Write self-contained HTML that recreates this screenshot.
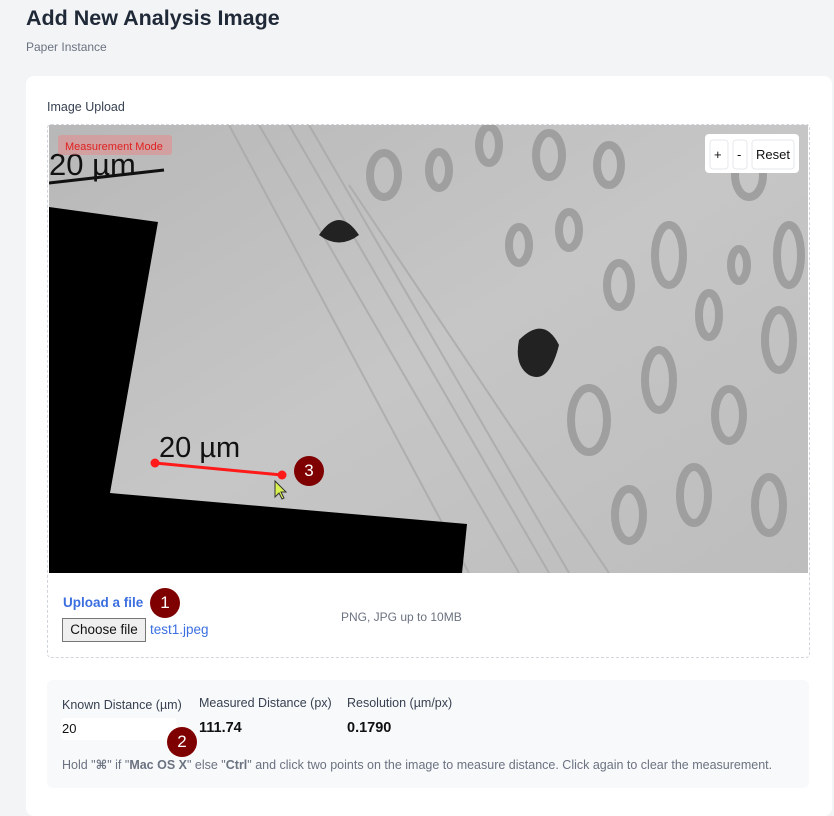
<!DOCTYPE html>
<html><head><style>
body{margin:0;background:#f3f4f6;font-family:"Liberation Sans","DejaVu Sans",sans-serif;width:834px;height:797px;overflow:hidden;position:relative}
h1{position:absolute;left:26px;top:6px;margin:0;font-size:21.5px;font-weight:700;color:#1f2937}
.sub{position:absolute;left:26px;top:40px;font-size:12px;color:#6b7280}
.card{position:absolute;left:26px;top:76px;width:806px;height:740px;background:#fff;border-radius:8px}
.lbl{position:absolute;left:47px;top:100px;font-size:12.5px;color:#374151}
.box{position:absolute;left:47px;top:124px;width:761px;height:532px;border:1px dashed #d1d5db;border-radius:4px}
.img{position:absolute;left:49px;top:125px;width:759px;height:448px;overflow:hidden}
.badge{position:absolute;width:30px;height:30px;border-radius:50%;background:#7f0000;color:#fff;font-size:17px;text-align:center;line-height:30px}
</style></head><body>
<h1>Add New Analysis Image</h1>
<div class="sub">Paper Instance</div>
<div class="card"></div>
<div class="lbl">Image Upload</div>
<div class="box"></div>
<div class="img">
<svg width="759" height="448" viewBox="0 0 759 448">
<defs><linearGradient id="g" x1="0" y1="0" x2="1" y2="1"><stop offset="0" stop-color="#b8b8b8"/><stop offset=".5" stop-color="#c6c6c6"/><stop offset="1" stop-color="#bdbdbd"/></linearGradient></defs>
<rect width="759" height="448" fill="url(#g)"/>
<g stroke="#a5a5a5" stroke-width="2" fill="none" opacity=".7">
<path d="M180 0 L420 448 M210 0 L470 448 M240 0 L500 448 M260 0 L520 448 M300 60 L560 448"/>
</g>
<g fill="none" stroke="#979797" stroke-width="8" opacity=".8">
<ellipse cx="335" cy="50" rx="14" ry="22"/><ellipse cx="390" cy="45" rx="10" ry="18"/><ellipse cx="440" cy="20" rx="10" ry="18"/>
<ellipse cx="500" cy="30" rx="13" ry="22"/><ellipse cx="560" cy="40" rx="12" ry="20"/><ellipse cx="620" cy="130" rx="14" ry="30"/>
<ellipse cx="700" cy="50" rx="14" ry="22"/><ellipse cx="740" cy="130" rx="12" ry="30"/><ellipse cx="520" cy="105" rx="10" ry="18"/>
<ellipse cx="570" cy="160" rx="12" ry="22"/><ellipse cx="660" cy="190" rx="10" ry="22"/><ellipse cx="730" cy="215" rx="14" ry="30"/>
<ellipse cx="610" cy="255" rx="14" ry="30"/><ellipse cx="540" cy="295" rx="18" ry="32"/><ellipse cx="680" cy="290" rx="14" ry="26"/>
<ellipse cx="645" cy="370" rx="14" ry="28"/><ellipse cx="720" cy="380" rx="14" ry="28"/><ellipse cx="580" cy="390" rx="14" ry="26"/>
<ellipse cx="690" cy="140" rx="8" ry="16"/><ellipse cx="470" cy="120" rx="10" ry="18"/>
</g>
<path d="M0 82 L109 97 L61 368 L418 399 L413 448 L0 448Z" fill="#000"/>
<path d="M470 215 q25 -25 40 5 q-10 40 -30 30 q-15 -10 -10 -35z" fill="#222"/>
<path d="M270 110 q20 -30 40 0 q-20 15 -40 0z" fill="#222"/>
<path d="M0 58 L115 45" stroke="#111" stroke-width="3"/>
<text x="0" y="50" font-size="31" font-family="Liberation Sans" fill="#111">20 µm</text>
<text x="110" y="332" font-size="29" font-family="Liberation Sans" fill="#111">20  µm</text>
<rect x="9" y="10" width="114" height="20" rx="3" fill="#f08080" opacity=".45"/>
<text x="16" y="25" font-size="11" font-family="Liberation Sans" fill="#e02020">Measurement Mode</text>
<line x1="106" y1="338" x2="233" y2="350" stroke="#ff1a1a" stroke-width="3"/>
<circle cx="106" cy="338" r="4.5" fill="#ff1a1a"/><circle cx="233" cy="350" r="4.5" fill="#ff1a1a"/>
<path d="M226 356 l0 16 l4 -4 l3 6 l2 -1 l-3 -6 l5 0z" fill="#d8f050" stroke="#333" stroke-width="1"/>
<rect x="656" y="9" width="94" height="39" rx="4" fill="#fff"/>
<g font-size="13" font-family="Liberation Sans" fill="#111" stroke="none">
<rect x="661" y="15" width="18" height="29" rx="3" fill="#fff" stroke="#e5e7eb"/><text x="665" y="34">+</text>
<rect x="684" y="15" width="14" height="29" rx="3" fill="#fff" stroke="#e5e7eb"/><text x="688" y="34">-</text>
<rect x="703" y="15" width="42" height="29" rx="3" fill="#fff" stroke="#e5e7eb"/><text x="707" y="34">Reset</text>
</g>
</svg>
</div>
<div class="badge" style="left:294px;top:456px">3</div>
<div style="position:absolute;left:63px;top:595px;font-size:13.5px;font-weight:700;color:#3b6fe0">Upload a file</div>
<div class="badge" style="left:150px;top:588px">1</div>
<div style="position:absolute;left:62px;top:618px;width:84px;height:24px;border:1px solid #767676;background:#efefef;font-size:13.5px;line-height:22px;text-align:center;color:#111;box-sizing:border-box">Choose file</div>
<div style="position:absolute;left:150px;top:622px;font-size:13.5px;color:#3b6fe0">test1.jpeg</div>
<div style="position:absolute;left:341px;top:610px;font-size:12px;color:#6b7280">PNG, JPG up to 10MB</div>
<div style="position:absolute;left:47px;top:680px;width:762px;height:108px;background:#f8f9fb;border-radius:6px"></div>
<div style="position:absolute;left:62px;top:698px;font-size:12.5px;color:#374151">Known Distance (µm)</div>
<div style="position:absolute;left:199px;top:696px;font-size:12.5px;color:#374151">Measured Distance (px)</div>
<div style="position:absolute;left:347px;top:696px;font-size:12.5px;color:#374151">Resolution (µm/px)</div>
<div style="position:absolute;left:61px;top:718px;width:115px;height:22px;background:#fff;border-radius:4px;font-size:13px;line-height:22px;padding-left:1px;color:#111">20</div>
<div style="position:absolute;left:199px;top:720px;font-size:14.5px;font-weight:700;color:#111">111.74</div>
<div style="position:absolute;left:347px;top:720px;font-size:14.5px;font-weight:700;color:#111">0.1790</div>
<div class="badge" style="left:167px;top:727px">2</div>
<div style="position:absolute;left:62px;top:757px;font-size:12.5px;color:#6b7280;white-space:nowrap">Hold "<b>⌘</b>" if "<b>Mac OS X</b>" else "<b>Ctrl</b>" and click two points on the image to measure distance. Click again to clear the measurement.</div>
</body></html>
